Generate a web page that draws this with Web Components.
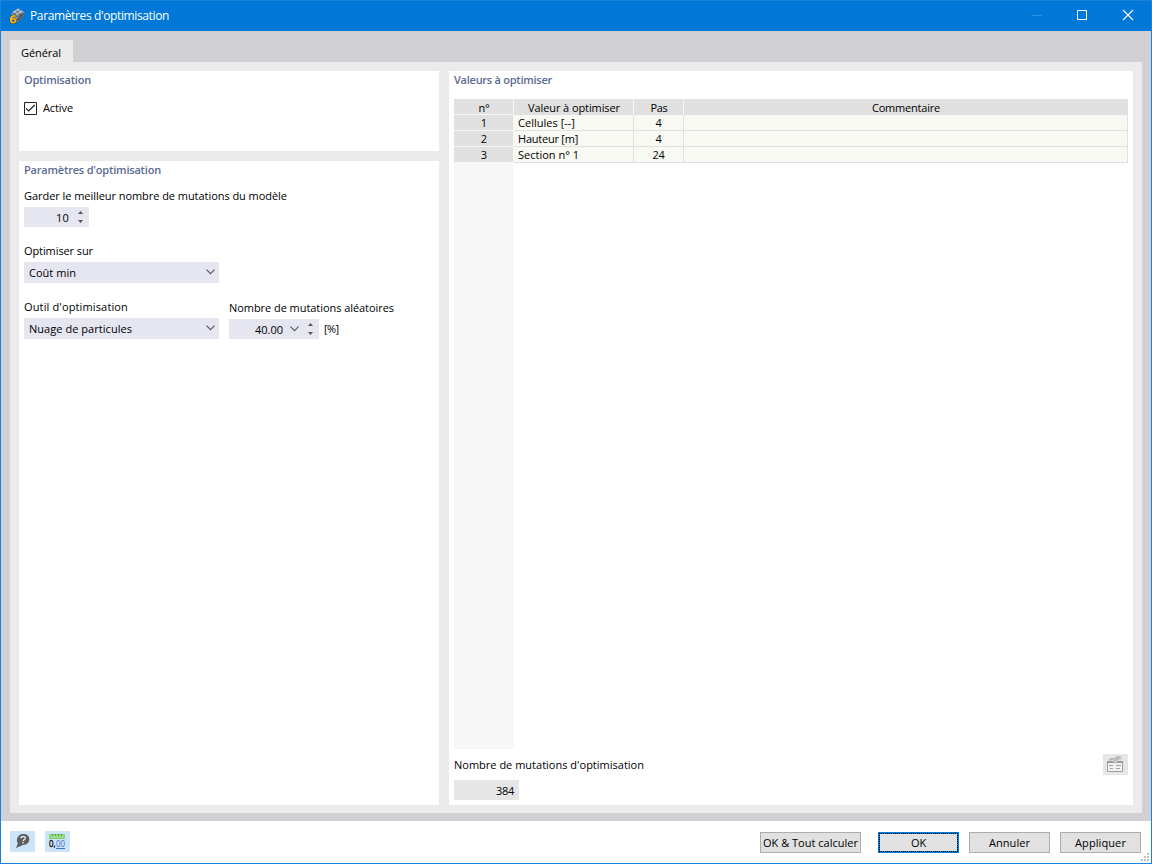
<!DOCTYPE html>
<html lang="fr">
<head>
<meta charset="utf-8">
<title>Paramètres d'optimisation</title>
<style>
  html, body { margin: 0; height: 100%; overflow: hidden; }
  body { font: 11px/16px "Open Sans", "Noto Sans", sans-serif; color: #000; }
</style>
</head>
<body>
<settings-dialog></settings-dialog>

<script>
function render(host, html) {
  host.attachShadow({ mode: "open" }).innerHTML = html;
}

/**
 * <fit-text width="120">: one line of text whose letter spacing
 * is adjusted so that it takes the given width.
 */
class FitText extends HTMLElement {
  connectedCallback() {
    if (this.shadowRoot) return;
    render(this, `
      <style>
        :host { display: block; width: max-content; }
        span { display: block; width: max-content; white-space: pre; }
      </style>
      <span></span>
    `);
    const span = this.shadowRoot.querySelector("span");
    span.textContent = this.textContent;
    const width = Number(this.getAttribute("width"));
    if (!width) return;
    const gap = (width - span.getBoundingClientRect().width) / span.textContent.length;
    span.style.letterSpacing = gap.toFixed(3) + "px";
  }
}

/** <title-bar>: icon, caption and the window controls. */
class TitleBar extends HTMLElement {
  connectedCallback() {
    render(this, `
      <style>
        :host {
          display: flex;
          align-items: center;
          height: 30px;
          padding: 0 0 0 8px;
          background: #0078d7;
          color: #fff;
          flex: none;
        }
        .caption { flex: 1; margin-left: 5px; font-size: 12px; }
        .control { width: 46px; height: 30px; }
        svg { display: block; }
      </style>
      <svg width="16" height="16" viewBox="0 0 16 16">
        <path d="M3.500 4 9 .5l6.500 4-1 4L9 14.500 6 10 2.500 7z" fill="#9dacc2"/>
        <path d="M3.500 4 9 .5l6.500 4-4.500 2.500z" fill="#b4c0d0"/>
        <path d="M11 7l4.500-2.500-1 4L9 14.500 8 11z" fill="#54606f"/>
        <path d="M3 7.500 11.500 2M6 9.500 14 4M3.500 4l6 6M6.500 2l6.500 6M15.500 4.500 11 7 8 11" fill="none" stroke="#3a4655" stroke-width=".6"/>
        <path d="M6.200 8.600C5.700 7.400 1.800 7.500 1.800 11.600c0 4.100 4.700 3.800 4.700.9 0-2.100-3-2.500-4.100-.4" fill="none" stroke="#3c3524" stroke-width="2.600"/>
        <path d="M6.200 8.600C5.700 7.400 1.800 7.500 1.800 11.600c0 4.100 4.700 3.800 4.700.9 0-2.100-3-2.500-4.100-.4" fill="none" stroke="#f8b617" stroke-width="1.800"/>
      </svg>
      <span class="caption"><fit-text width="139">Paramètres d'optimisation</fit-text></span>
      <svg class="control" viewBox="0 0 46 30"><path d="M19 14.500h10" stroke="#2e8fde"/></svg>
      <svg class="control" viewBox="0 0 46 30"><path d="M18.500 9.500h9v9h-9z" fill="none" stroke="#fff"/></svg>
      <svg class="control" viewBox="0 0 46 30"><path d="M18 9l10 10M28 9 18 19" stroke="#fff" stroke-width="1.100"/></svg>
    `);
  }
}

/** <group-card heading="..." width="...">: white box with a bold heading. */
class GroupCard extends HTMLElement {
  connectedCallback() {
    render(this, `
      <style>
        :host {
          display: flex;
          flex-direction: column;
          box-sizing: border-box;
          background: #fff;
          padding: 1px 5px 5px;
        }
        h2 { margin: 0; font-size: 11px; line-height: 16px; font-weight: 600; color: #5b6b92; }
      </style>
      <h2><fit-text width="${this.getAttribute("width")}">${this.getAttribute("heading")}</fit-text></h2>
      <slot></slot>
    `);
  }
}

/** <check-box>: a ticked box and its label. */
class CheckBox extends HTMLElement {
  connectedCallback() {
    render(this, `
      <style>
        :host { display: flex; align-items: center; gap: 6px; }
        svg { display: block; }
      </style>
      <svg width="13" height="13" viewBox="0 0 13 13">
        <path d="M.5.5h12v12H.5z" fill="#fff" stroke="#222"/>
        <path d="M2 6.300 4.700 9l6-6" fill="none" stroke="#222" stroke-width="1.200"/>
      </svg>
      <slot></slot>
    `);
  }
}

/** <value-field type="select|spin|both|readonly">: flat input box. */
class ValueField extends HTMLElement {
  connectedCallback() {
    const type = this.getAttribute("type");
    const chevron = `<svg class="chevron" width="9" height="6" viewBox="0 0 9 6"><path d="M.5.7l4 4 4-4" fill="none" stroke="#555" stroke-width="1.100"/></svg>`;
    const spinner = `<svg class="spin" width="5" height="12" viewBox="0 0 5 12"><path d="M0 3 2.500 0 5 3zM0 9l2.500 3L5 9z" fill="#555"/></svg>`;
    render(this, `
      <style>
        :host {
          display: flex;
          align-items: center;
          box-sizing: border-box;
          height: 20px;
          padding: 2px 5px 0;
          background: #e6e6f1;
        }
        :host([type="select"]) { height: 21px; justify-content: space-between; padding: 1px 4px 0 5px; }
        :host([type="spin"]), :host([type="both"]), :host([type="readonly"]) { justify-content: flex-end; }
        :host([type="readonly"]) { background: #e6e6e6; }
        svg { display: block; margin-top: -3px; }
        .spin { margin-left: 9px; margin-right: 1px; }
        .chevron { margin-left: 7px; }
        :host([type="select"]) .chevron { margin-top: -2px; }
      </style>
      <slot></slot>
      ${type === "select" || type === "both" ? chevron : ""}
      ${type === "spin" || type === "both" ? spinner : ""}
    `);
  }
}

/** <push-button>: classic dialog button, "default" draws the focus frame. */
class PushButton extends HTMLElement {
  connectedCallback() {
    render(this, `
      <style>
        :host { display: block; width: 81px; height: 21px; }
        button {
          display: flex;
          justify-content: center;
          align-items: center;
          width: 100%;
          height: 100%;
          box-sizing: border-box;
          padding: 1px 0 0;
          border: 1px solid #adadad;
          background: #e1e1e1;
          font: inherit;
          color: inherit;
        }
        :host([default]) button {
          border: 2px solid #0078d7;
          outline: 1px dotted #000;
          outline-offset: -2px;
        }
      </style>
      <button><slot></slot></button>
    `);
  }
}

/** <tool-button>: small square around a slotted icon. */
class ToolButton extends HTMLElement {
  connectedCallback() {
    render(this, `
      <style>
        :host {
          display: flex;
          align-items: center;
          box-sizing: border-box;
          width: 25px;
          height: 21px;
          padding-left: 4px;
          background: #cce4f7;
        }
        :host([disabled]) { background: #e6e6e6; }
        ::slotted(svg) { overflow: visible; }
      </style>
      <slot></slot>
    `);
  }
}

/** <values-table>: the list of the values to optimise. */
class ValuesTable extends HTMLElement {
  connectedCallback() {
    const rows = [
      ["1", "Cellules [--]", 57, "4", 6],
      ["2", "Hauteur [m]", 60, "4", 6],
      ["3", "Section n° 1", 61, "24", 12],
    ];
    render(this, `
      <style>
        :host { display: flex; flex-direction: column; }
        .row { display: grid; grid-template-columns: 60px 120px 50px 1fr; height: 16px; }
        .row > * { display: flex; justify-content: center; box-sizing: border-box; height: 16px; }
        .head > * { background: #e0e0e0; border-right: 1px solid #f7f7f7; line-height: 18px; padding-left: 1px; }
        .head > :last-child { border-right-color: #e0e0e0; }
        .row > .cell { background: #f9f9f3; border-right: 1px solid #e0e0e0; border-bottom: 1px solid #e0e0e0; line-height: 16px; }
        .row > .name { justify-content: flex-start; padding-left: 4px; }
        .row > .num { background: #e0e0e0; border-right: 1px solid #f7f7f7; border-bottom: 1px solid #f7f7f7; padding-left: 1px; line-height: 15px; }
        .head > .num { line-height: 18px; }
        .rest { flex: 1; width: 60px; background: #f7f7f7; }
      </style>
      <div class="row head">
        <div class="num" style="line-height: 18px"><fit-text width="11">n°</fit-text></div>
        <div><fit-text width="92">Valeur à optimiser</fit-text></div>
        <div><fit-text width="17">Pas</fit-text></div>
        <div><fit-text width="68">Commentaire</fit-text></div>
      </div>
      ${rows.map(([n, name, w, steps, sw]) => `
        <div class="row">
          <div class="num">${n}</div>
          <div class="cell name"><fit-text width="${w}">${name}</fit-text></div>
          <div class="cell"><fit-text width="${sw}">${steps}</fit-text></div>
          <div class="cell"></div>
        </div>
      `).join("")}
      <div class="rest"></div>
    `);
  }
}

/** <settings-dialog>: the whole window. */
class SettingsDialog extends HTMLElement {
  connectedCallback() {
    render(this, `
      <style>
        :host {
          display: flex;
          flex-direction: column;
          box-sizing: border-box;
          width: 1152px;
          height: 864px;
          border: 1px solid #1883d9;
          background: #fff;
        }
        .body { display: flex; flex-direction: column; height: 790px; box-sizing: border-box; padding: 9px 9px 8px; background: #d1d0d5; }
        .tab { width: 63px; height: 22px; box-sizing: border-box; padding: 5px 0 0 11px; background: #ebebeb; }
        .page { flex: 1; display: flex; gap: 10px; padding: 9px 9px 8px; background: #ebebeb; }
        .left { display: flex; flex-direction: column; gap: 10px; width: 420px; }
        .left > :first-child { height: 80px; }
        .left > :last-child { flex: 1; }
        .right { flex: 1; }
        check-box { margin-top: 12px; }
        .label { height: 16px; }
        .pair { display: flex; gap: 10px; align-items: flex-start; margin-top: 16px; }
        .inline { display: flex; gap: 5px; align-items: center; margin-top: 3px; }
        values-table { flex: 1; margin-top: 11px; }
        .total { display: flex; justify-content: space-between; height: 31px; padding-top: 5px; box-sizing: border-box; }
        .total .label { margin-top: 3px; }
        footer { flex: 1; display: flex; align-items: flex-start; padding: 10px 10px 0 9px; position: relative; }
        footer tool-button { margin-right: 10px; }
        .buttons { margin-left: auto; margin-top: 1px; display: flex; gap: 10px; }
        .grip { position: absolute; right: 2px; bottom: 2px; }
      </style>
      <title-bar></title-bar>
      <div class="body">
        <div class="tab"><fit-text width="40">Général</fit-text></div>
        <div class="page">
          <div class="left">
            <group-card heading="Optimisation" width="67">
              <check-box><fit-text width="30">Active</fit-text></check-box>
            </group-card>
            <group-card heading="Paramètres d'optimisation" width="137">
              <div class="label" style="margin-top: 10px"><fit-text width="263">Garder le meilleur nombre de mutations du modèle</fit-text></div>
              <value-field type="spin" style="width: 65px; margin-top: 3px"><fit-text width="13">10</fit-text></value-field>
              <div class="label" style="margin-top: 16px"><fit-text width="69">Optimiser sur</fit-text></div>
              <value-field type="select" style="width: 195px; margin-top: 3px"><fit-text width="47">Coût min</fit-text></value-field>
              <div class="pair">
                <div>
                  <div class="label"><fit-text width="104">Outil d'optimisation</fit-text></div>
                  <value-field type="select" style="width: 195px; margin-top: 3px"><fit-text width="103">Nuage de particules</fit-text></value-field>
                </div>
                <div style="margin-top: 1px">
                  <div class="label"><fit-text width="165">Nombre de mutations aléatoires</fit-text></div>
                  <div class="inline">
                    <value-field type="both" style="width: 90px"><fit-text width="28">40.00</fit-text></value-field>
                    <fit-text width="14.500">[%]</fit-text>
                  </div>
                </div>
              </div>
            </group-card>
          </div>
          <group-card class="right" heading="Valeurs à optimiser" width="98">
            <values-table></values-table>
            <div class="total">
              <div class="label"><fit-text width="190">Nombre de mutations d'optimisation</fit-text></div>
              <tool-button disabled>
                <svg width="16" height="16" viewBox="0 0 16 16">
                  <path d="M.5 5.500h15v9H.5z" fill="#f1f1f1" stroke="#a0a0a0"/>
                  <path d="M0 4h16v2H0z" fill="#9a9a9a"/>
                  <path d="M2 8.500h4M9 8.500h5M3 11.500h3M9 11.500h4" stroke="#a0a0a0"/>
                  <path d="M1 3l3-2 3 0 2-2h5l1 3-4 1-2 4-2-1-1-3-3 1z" fill="#c6c6c6"/>
                  <path d="M3 2.500 7 1.500M8 3l5-3" stroke="#adadad"/>
                </svg>
              </tool-button>
            </div>
            <value-field type="readonly" style="width: 65px"><fit-text width="18">384</fit-text></value-field>
          </group-card>
        </div>
      </div>
      <footer>
        <tool-button>
          <svg width="16" height="16" viewBox="0 0 16 16">
            <path d="M9 0c4 0 6.300 2 6.300 5.200S13 10.800 9 11L2 14l1.800-4.400C1.500 4.500 4.500 0 9 0z" fill="#5d5d5d"/>
            <path d="M6.800 4.200c.2-2.400 4.700-2.300 4.500 0-.2 1.500-2.200 1.300-2.200 3M9 8v1.500" fill="none" stroke="#d5e6f4" stroke-width="1.400"/>
          </svg>
        </tool-button>
        <tool-button>
          <svg width="17" height="16" viewBox="0 0 17 16">
            <path d="M.5.500h15v4H.5z" fill="#96dc82" stroke="#86cf74"/>
            <path d="M3.500 0v2M6.500 0v2M9.500 0v2M12.500 0v2" stroke="#58a34a"/>
            <text x="0" y="13" font-size="9.500" textLength="6.500" lengthAdjust="spacingAndGlyphs" stroke="#000" stroke-width=".3">0,</text>
            <text x="7" y="13" font-size="9.500" fill="#3c6fd6" textLength="9" lengthAdjust="spacingAndGlyphs">00</text>
            <path d="M7 14.500h9" stroke="#3c6fd6"/>
          </svg>
        </tool-button>
        <div class="buttons">
          <push-button style="width: 101px; margin-right: 7px"><fit-text width="95">OK &amp; Tout calculer</fit-text></push-button>
          <push-button default><fit-text width="15">OK</fit-text></push-button>
          <push-button><fit-text width="41">Annuler</fit-text></push-button>
          <push-button><fit-text width="51">Appliquer</fit-text></push-button>
        </div>
        <svg class="grip" width="8" height="8" viewBox="0 0 8 8">
          <path d="M6 0h2v2H6zM3 3h2v2H3zM6 3h2v2H6zM0 6h2v2H0zM3 6h2v2H3zM6 6h2v2H6z" fill="#bfbfbf"/>
        </svg>
      </footer>
    `);
  }
}

customElements.define("fit-text", FitText);
customElements.define("title-bar", TitleBar);
customElements.define("group-card", GroupCard);
customElements.define("check-box", CheckBox);
customElements.define("value-field", ValueField);
customElements.define("push-button", PushButton);
customElements.define("tool-button", ToolButton);
customElements.define("values-table", ValuesTable);
customElements.define("settings-dialog", SettingsDialog);
</script>
</body>
</html>
